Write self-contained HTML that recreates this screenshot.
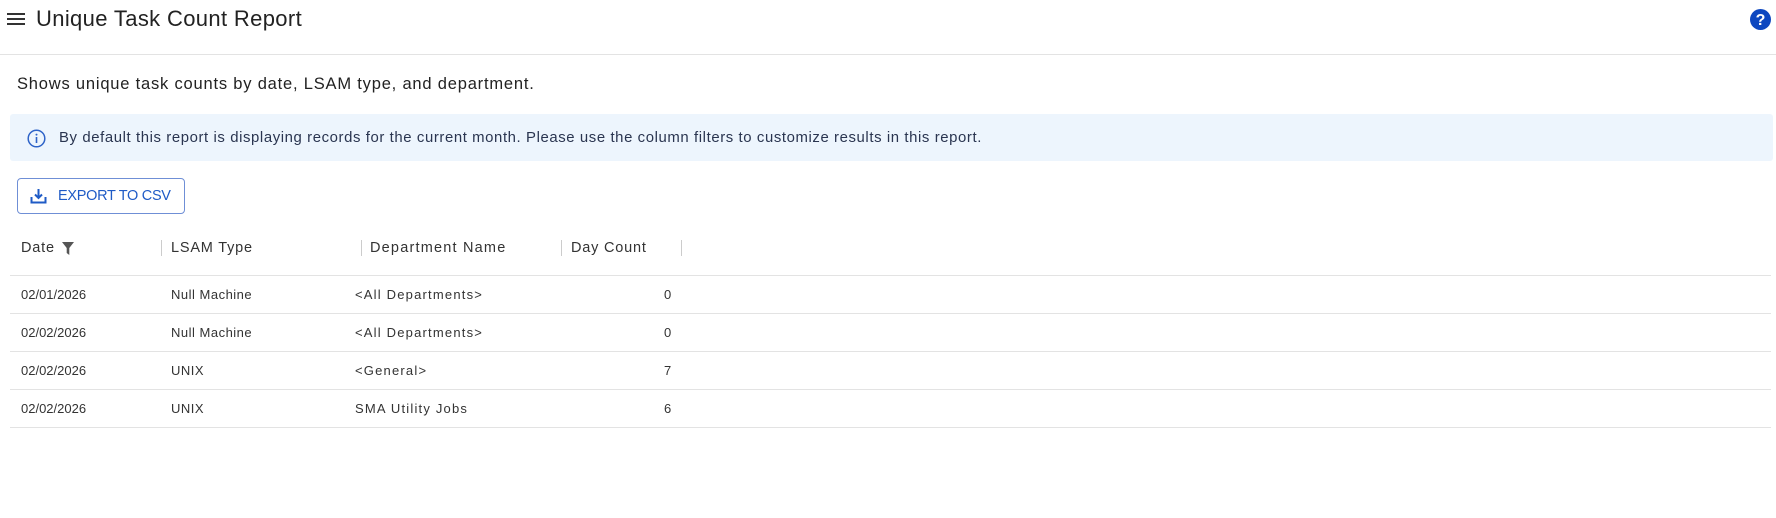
<!DOCTYPE html>
<html><head><style>
*{box-sizing:border-box;margin:0;padding:0}
body{width:1776px;height:518px;background:#fff;font-family:"Liberation Sans",sans-serif;color:#222;position:relative;overflow:hidden}
.a{position:absolute;white-space:nowrap}
.hl{position:absolute;left:0;right:0;height:1px;background:#e3e3e3}
.th{font-size:14.5px;color:#333;top:240px;letter-spacing:0.8px}
.sep{position:absolute;top:240px;width:1px;height:16px;background:#ccc}
.td{font-size:13px;color:#333}
.l{letter-spacing:0.5px}
.d{letter-spacing:1.2px}
</style></head><body>
<svg class="a" style="left:7px;top:12px" width="18" height="14" viewBox="0 0 18 14"><rect y="1" width="18" height="2" fill="#333"/><rect y="6" width="18" height="2" fill="#333"/><rect y="11" width="18" height="2" fill="#333"/></svg>
<div class="a" style="left:36px;top:6px;font-size:22px;color:#222;letter-spacing:0.35px">Unique Task Count Report</div>
<svg class="a" style="left:1750px;top:9px" width="21" height="21" viewBox="0 0 21 21"><circle cx="10.5" cy="10.5" r="10.5" fill="#0d47c0"/><text x="10.5" y="16" text-anchor="middle" font-family="Liberation Sans" font-weight="bold" font-size="16" fill="#fff">?</text></svg>
<div class="hl" style="top:54px"></div>
<div class="a" style="left:17px;top:75px;font-size:16.5px;color:#222;letter-spacing:0.8px">Shows unique task counts by date, LSAM type, and department.</div>
<div class="a" style="left:10px;top:114px;width:1763px;height:47px;background:#edf5fd;border-radius:3px"></div>
<svg class="a" style="left:27px;top:129px" width="19" height="19" viewBox="0 0 19 19"><circle cx="9.5" cy="9.5" r="8.3" fill="none" stroke="#2e63c8" stroke-width="1.5"/><rect x="8.7" y="8" width="1.6" height="6" fill="#2e63c8"/><circle cx="9.5" cy="5.6" r="1" fill="#2e63c8"/></svg>
<div class="a" style="left:59px;top:130px;font-size:14.9px;color:#2a3550;letter-spacing:0.6px">By default this report is displaying records for the current month. Please use the column filters to customize results in this report.</div>
<div class="a" style="left:17px;top:178px;width:168px;height:36px;border:1px solid #6f8fd6;border-radius:4px"></div>
<svg class="a" style="left:30px;top:188px" width="17" height="16" viewBox="0 0 17 16"><path d="M8.5 1v9M5 6.5l3.5 3.5 3.5-3.5M1.5 9v5.5h14V9" fill="none" stroke="#1f5bc6" stroke-width="2"/></svg>
<div class="a" style="left:58px;top:188px;font-size:14.5px;color:#1f5bc6;letter-spacing:-0.3px">EXPORT TO CSV</div>
<div class="a th" style="left:21px">Date</div>
<svg class="a" style="left:62px;top:242px" width="12" height="13" viewBox="0 0 12 13"><path d="M0 0h12L7.3 6v7L4.7 11V6z" fill="#555"/></svg>
<div class="sep" style="left:161px"></div>
<div class="a th" style="left:171px">LSAM Type</div>
<div class="sep" style="left:361px"></div>
<div class="a th" style="left:370px;letter-spacing:1.2px">Department Name</div>
<div class="sep" style="left:561px"></div>
<div class="a th" style="left:571px">Day Count</div>
<div class="sep" style="left:681px"></div>
<div class="hl" style="top:275px;left:10px;right:5px"></div>
<div class="hl" style="top:313px;left:10px;right:5px"></div>
<div class="hl" style="top:351px;left:10px;right:5px"></div>
<div class="hl" style="top:389px;left:10px;right:5px"></div>
<div class="hl" style="top:427px;left:10px;right:5px"></div>

<div class="a td" style="left:21px;top:287px">02/01/2026</div><div class="a td l" style="left:171px;top:287px">Null Machine</div><div class="a td d" style="left:355px;top:287px">&lt;All Departments&gt;</div><div class="a td" style="left:664px;top:287px">0</div>
<div class="a td" style="left:21px;top:325px">02/02/2026</div><div class="a td l" style="left:171px;top:325px">Null Machine</div><div class="a td d" style="left:355px;top:325px">&lt;All Departments&gt;</div><div class="a td" style="left:664px;top:325px">0</div>
<div class="a td" style="left:21px;top:363px">02/02/2026</div><div class="a td l" style="left:171px;top:363px">UNIX</div><div class="a td d" style="left:355px;top:363px">&lt;General&gt;</div><div class="a td" style="left:664px;top:363px">7</div>
<div class="a td" style="left:21px;top:401px">02/02/2026</div><div class="a td l" style="left:171px;top:401px">UNIX</div><div class="a td d" style="left:355px;top:401px">SMA Utility Jobs</div><div class="a td" style="left:664px;top:401px">6</div>
</body></html>
